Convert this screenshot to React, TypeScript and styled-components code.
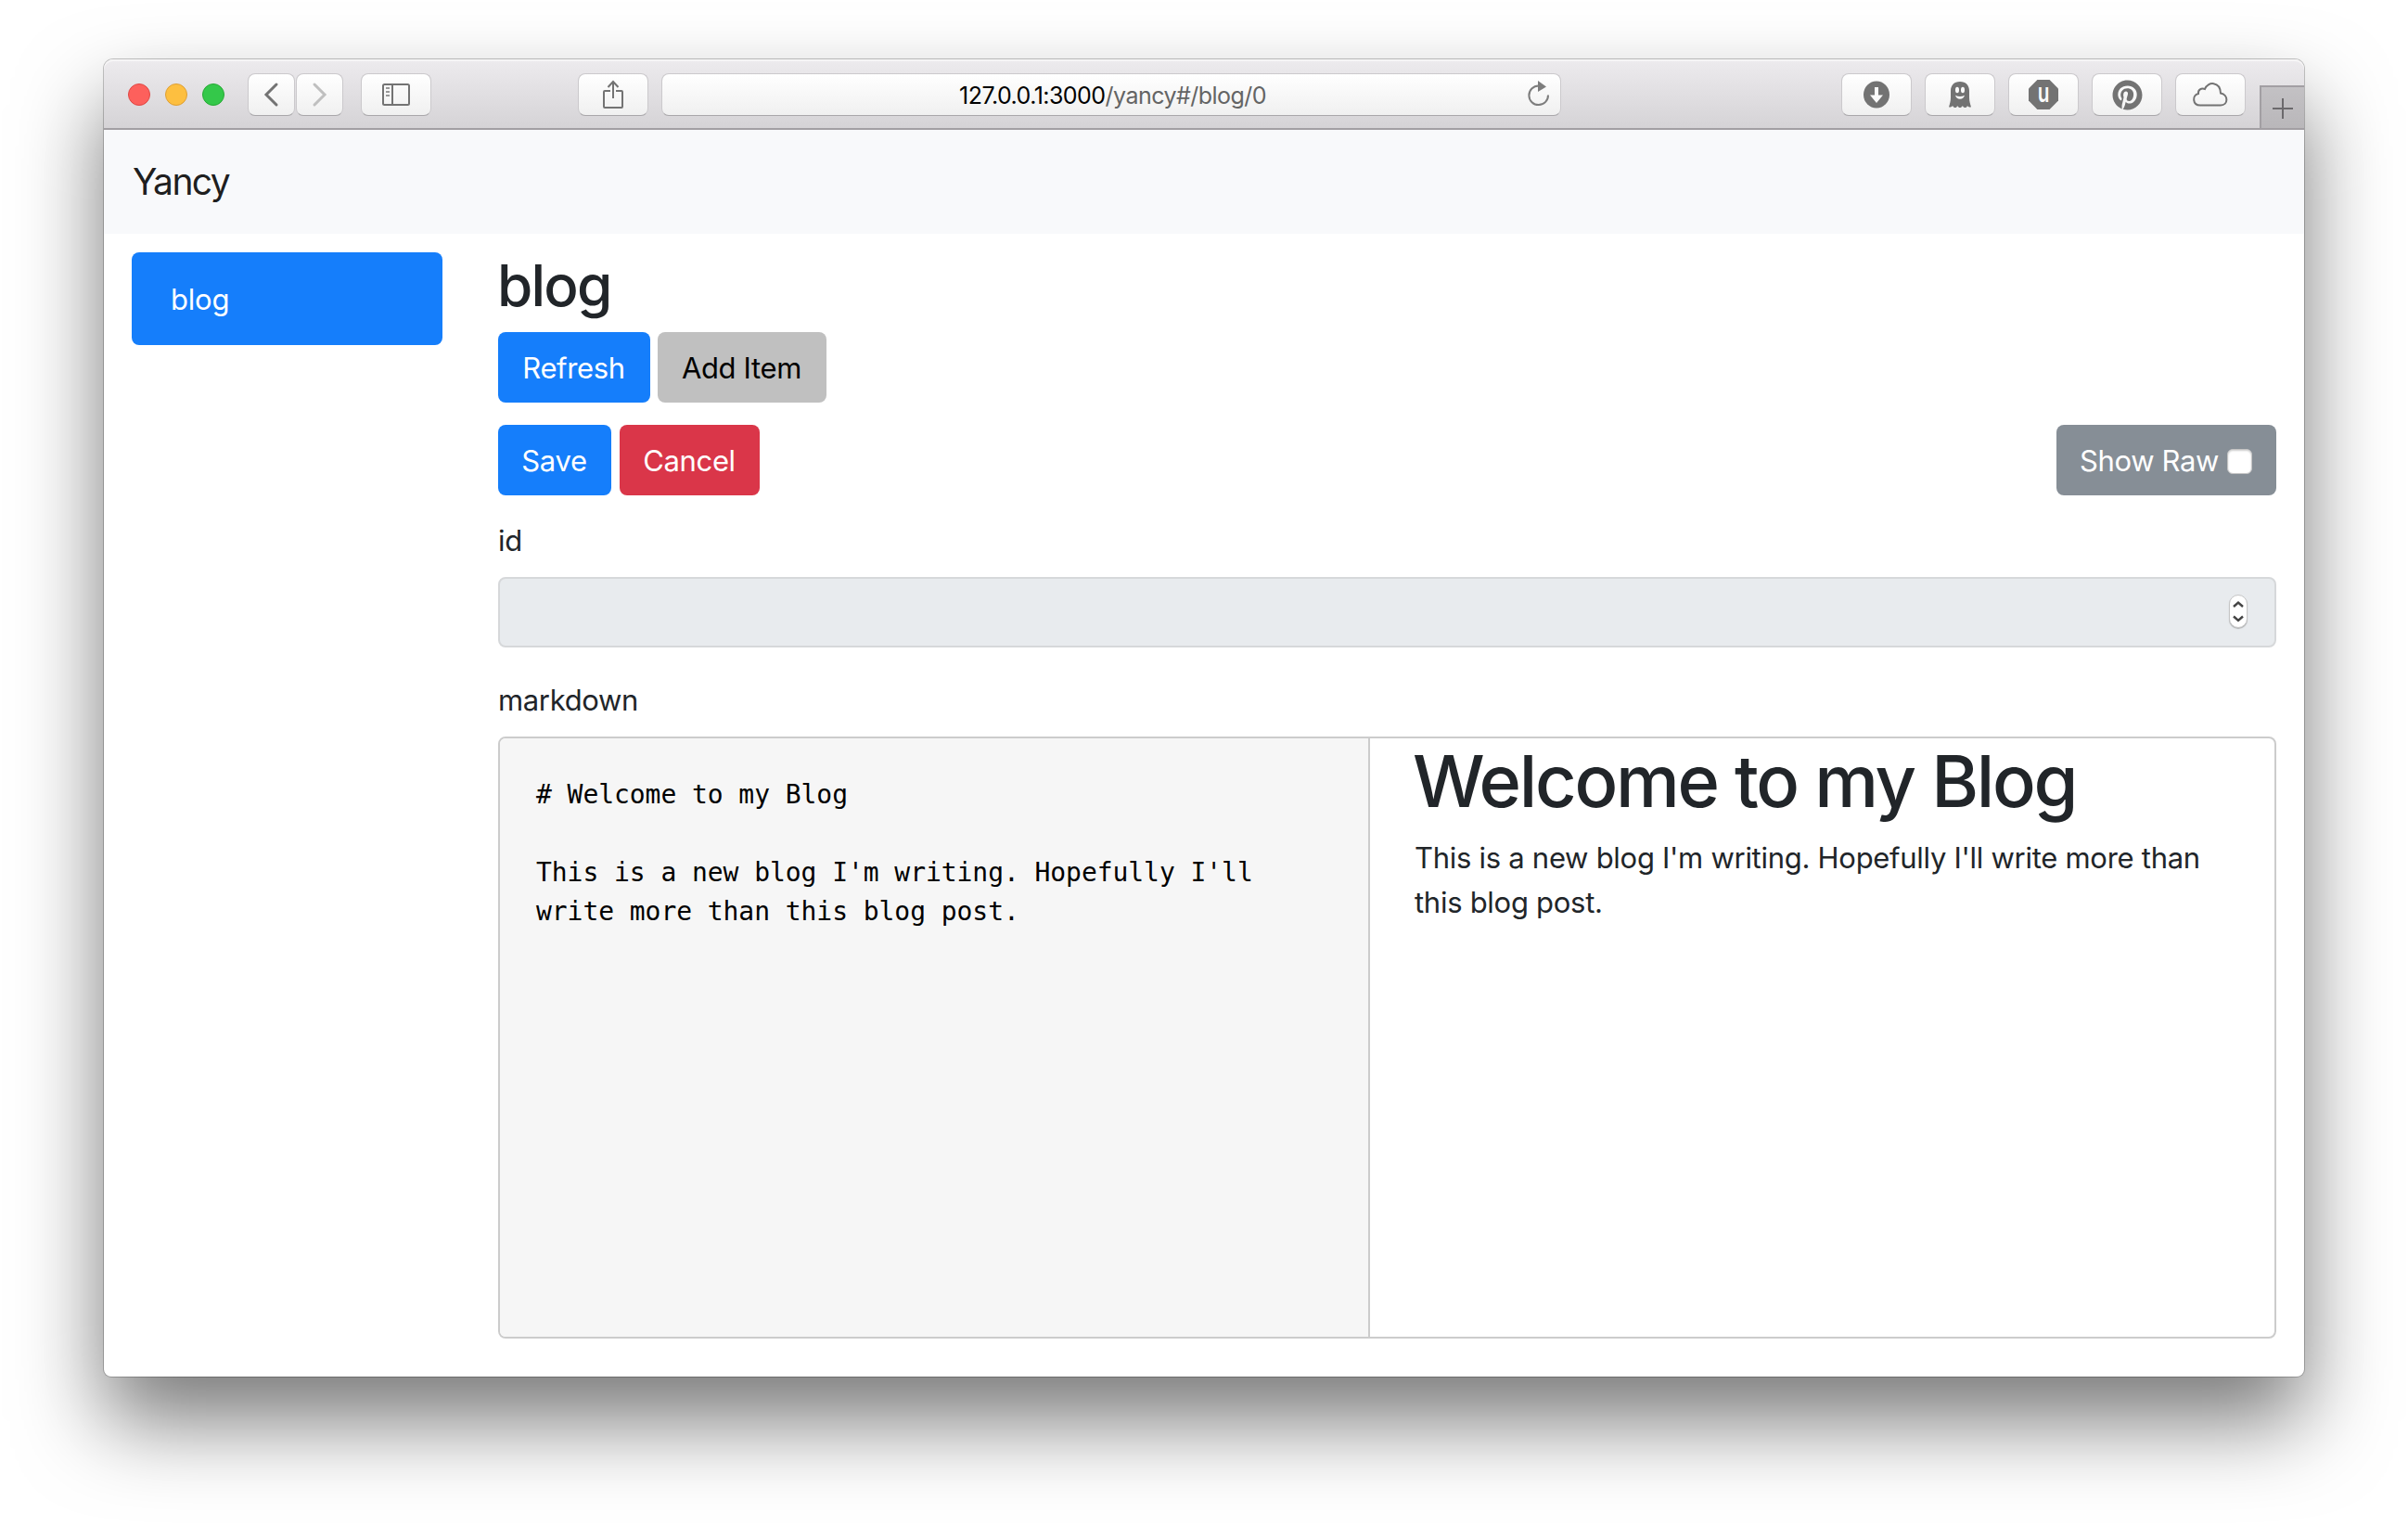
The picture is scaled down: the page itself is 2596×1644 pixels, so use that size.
import React from "react";
import styled, { createGlobalStyle } from "styled-components";
import { FaPinterest } from "react-icons/fa";

const GlobalStyle = createGlobalStyle`
  *, *::before, *::after { box-sizing: border-box; }
  html, body { margin: 0; background: #fff; }
  body {
    font-family: Inter, "Liberation Sans", sans-serif;
    font-size: 31px;
    line-height: 48px;
    color: #212529;
  }
  h1, h2, p, pre { margin: 0; }
`;

const Desktop = styled.div`
  width: 2596px;
  height: 1644px;
  padding: 64px 112px 160px;
  overflow: hidden;
`;

const Window = styled.div`
  display: flex;
  flex-direction: column;
  height: 1420px;
  border-radius: 10px 10px 8px 8px;
  background: #fff;
  box-shadow: 0 0 0 1px rgba(0, 0, 0, 0.22), 0 48px 92px rgba(0, 0, 0, 0.53);
`;

const TitleBar = styled.header`
  display: flex;
  align-items: flex-start;
  height: 76px;
  padding: 15px 0 0 26px;
  border-bottom: 2px solid #a29fa3;
  border-radius: 10px 10px 0 0;
  background: linear-gradient(#edebee, #d5d3d6);
  box-shadow: inset 0 2px 0 #f6f5f6;
`;

const Lights = styled.div`
  display: flex;
  gap: 16px;
  margin: 11px 25px 0 0;
`;

const Light = styled.span<{ $fill: string; $edge: string }>`
  width: 24px;
  height: 24px;
  border: 1px solid ${(p) => p.$edge};
  border-radius: 50%;
  background: ${(p) => p.$fill};
`;

const ToolButton = styled.span<{ $width: number; $after?: number }>`
  display: flex;
  align-items: center;
  justify-content: center;
  flex: none;
  width: ${(p) => p.$width}px;
  height: 46px;
  margin-right: ${(p) => p.$after ?? 0}px;
  border: 1px solid #cbc9cc;
  border-bottom-color: #a9a7aa;
  border-radius: 8px;
  background: linear-gradient(#fff, #f0f0f0);
  color: #737373;

  svg { display: block; overflow: visible; }
`;

const AddressBar = styled(ToolButton)`
  position: relative;
  font-size: 25px;
  line-height: 32px;
  letter-spacing: -0.54px;
  color: #646464;
  white-space: pre;
`;

const Address = styled.span`
  padding: 2px 0 0 3px;
`;

const Host = styled.b`
  font-weight: 400;
  color: #000;
`;

const ReloadSlot = styled.span`
  position: absolute;
  right: 10px;
  top: 6px;
`;

const Extensions = styled.div`
  display: flex;
  gap: 14px;
  margin-left: auto;
`;

const NewTab = styled.span`
  display: flex;
  align-items: center;
  justify-content: center;
  width: 48px;
  height: 46px;
  margin: 13px 0 0 15px;
  padding-top: 2px;
  border: solid #a29fa3;
  border-width: 2px 0 0 2px;
  background: linear-gradient(#c3c1c4, #b9b7ba);
`;

const Navbar = styled.nav`
  height: 112px;
  padding: 32px 31px;
  background: #f8f9fb;
`;

const Brand = styled.span`
  font-size: 39px;
  letter-spacing: -1.6px;
  color: rgba(0, 0, 0, 0.9);
`;

const Body = styled.div`
  display: grid;
  grid-template-columns: 335px 1917px;
  column-gap: 60px;
  padding: 16px 30px 0;
`;

const SideLink = styled.a`
  display: block;
  height: 100px;
  margin-top: 4px;
  padding: 27px 42px;
  border-radius: 8px;
  background: #157efb;
  color: #fff;
  letter-spacing: -0.2px;
`;

const Title = styled.h2`
  margin: 0 0 12px -1px;
  padding-top: 1px;
  font-size: 62px;
  line-height: 77px;
  font-weight: 500;
  letter-spacing: -1.8px;
`;

const ButtonRow = styled.div<{ $gap: number }>`
  display: flex;
  gap: ${(p) => p.$gap}px;
  margin-bottom: 24px;
`;

const tones = {
  primary: ["#157efb", "#fff"],
  plain: ["#c0c0c0", "#000"],
  danger: ["#da3649", "#fff"],
  muted: ["#868e96", "#fff"],
} as const;

const Button = styled.span<{ $tone: keyof typeof tones; $width: number; $push?: boolean }>`
  display: flex;
  align-items: center;
  justify-content: center;
  width: ${(p) => p.$width}px;
  height: 76px;
  padding: 2px 1px 0 0;
  margin-left: ${(p) => (p.$push ? "auto" : "0")};
  border-radius: 8px;
  background: ${(p) => tones[p.$tone][0]};
  color: ${(p) => tones[p.$tone][1]};
  letter-spacing: -0.35px;
  white-space: nowrap;
`;

const Check = styled.span`
  width: 27px;
  height: 27px;
  margin-left: 9px;
  border: 1px solid #c4c4c4;
  border-radius: 6px;
  background: #fff;
  box-shadow: inset 0 1px 2px rgba(0, 0, 0, 0.2);
`;

const Label = styled.div`
  padding-top: 1px;
  letter-spacing: -0.35px;
  margin-bottom: 15px;
`;

const NumberField = styled.div`
  display: flex;
  align-items: center;
  justify-content: flex-end;
  height: 76px;
  margin-bottom: 32px;
  padding-right: 29px;
  border: 2px solid #d6d8da;
  border-radius: 8px;
  background: #e8ebee;
`;

const Stepper = styled.span`
  display: flex;
  width: 20px;
  height: 36px;
  margin-bottom: 2px;
  border: 1px solid #c6c6c6;
  border-radius: 10px;
  background: #fff;
  box-shadow: 0 1px 1px rgba(0, 0, 0, 0.25);
`;

const Editor = styled.div`
  display: grid;
  grid-template-columns: 938px 1fr;
  height: 649px;
  border: 2px solid #ccc;
  border-radius: 8px;
`;

const Source = styled.pre`
  padding: 40px 0 0 39px;
  border-right: 2px solid #ccc;
  border-radius: 6px 0 0 6px;
  background: #f6f6f6;
  color: #000;
  font-family: "DejaVu Sans Mono", monospace;
  font-size: 28px;
  line-height: 42px;
  letter-spacing: -0.06px;
`;

const Preview = styled.div`
  padding-left: 48px;
`;

const PreviewTitle = styled.h1`
  margin: 0 0 13px -2px;
  font-size: 77.5px;
  line-height: 92px;
  font-weight: 500;
  letter-spacing: -2.3px;
`;

const PreviewText = styled.p`
  width: 880px;
  letter-spacing: -0.28px;
`;

const GHOST =
  "M12 0C5.500 0 2 4 2 10V17C2 21.500 1 24 0 27.200C1.500 27.800 3 27.400 4 26C5 27.900 6 28 7 28C8 28 8.600 27.600 9.200 26C10 27.600 11 28 12 28C13 28 14 27.600 14.800 26C15.600 27.600 16.500 28 17.500 28C18.600 28 19.500 27.600 20 26C21 27.400 22.500 27.800 24 27.200C23 24 22 21.500 22 17V10C22 4 18.500 0 12 0Z";

const source = `# Welcome to my Blog

This is a new blog I'm writing. Hopefully I'll
write more than this blog post.`;

export default function App() {
  return (
    <>
      <GlobalStyle />
      <Desktop>
        <Window>
          <TitleBar>
            <Lights>
              <Light $fill="#fd605c" $edge="#df4744" />
              <Light $fill="#fdbf40" $edge="#de9f34" />
              <Light $fill="#34c84a" $edge="#26a934" />
            </Lights>
            <ToolButton $width={51} $after={1}>
              <svg width="18" height="26" fill="none" stroke="currentColor" strokeWidth="3" strokeLinecap="round">
                <path d="M14 2L3 13L14 24" />
              </svg>
            </ToolButton>
            <ToolButton $width={51} $after={19}>
              <svg width="16" height="26" fill="none" stroke="#bfbfbf" strokeWidth="3" strokeLinecap="round">
                <path d="M2 2L13 13L2 24" />
              </svg>
            </ToolButton>
            <ToolButton $width={76} $after={158}>
              <svg width="30" height="24" fill="none" stroke="currentColor" strokeWidth="2">
                <rect x="1" y="1" width="28" height="22" rx="1.500" />
                <path d="M11 1V23" />
                <path d="M4 5H8M4 9H8M4 13H8" stroke="#999" />
              </svg>
            </ToolButton>
            <ToolButton $width={76} $after={14}>
              <svg width="22" height="34" fill="none" stroke="currentColor" strokeWidth="2">
                <path d="M8 13H2Q1 13 1 14V30Q1 31 2 31H20Q21 31 21 30V14Q21 13 20 13H14" />
                <path d="M11 21V3M5.500 9L11 3L16.500 9" />
              </svg>
            </ToolButton>
            <AddressBar $width={970}>
              <Address>
                <Host>127.0.0.1:3000</Host>/yancy#/blog/0
              </Address>
              <ReloadSlot>
                <svg width="26" height="30" fill="none" stroke="#7d7d7d" strokeWidth="2">
                  <path d="M23 16.500A10.300 10.300 0 1 1 12.700 6.500" />
                  <path d="M12 1L21 7.500L12 13Z" fill="#7d7d7d" stroke="none" />
                </svg>
              </ReloadSlot>
            </AddressBar>
            <Extensions>
              <ToolButton $width={76}>
                <svg width="28" height="30">
                  <ellipse cx="14" cy="15" rx="14" ry="14.500" fill="currentColor" />
                  <path d="M12 7H16V15.500H21L14 24L7 15.500H12Z" fill="#fafafa" />
                </svg>
              </ToolButton>
              <ToolButton $width={76}>
                <svg width="24" height="28" fill="currentColor">
                  <path d={GHOST} />
                  <ellipse cx="9" cy="9" rx="2" ry="3.300" fill="#fafafa" />
                  <ellipse cx="15" cy="9" rx="2" ry="3.300" fill="#fafafa" />
                  <path d="M7 14.800Q12 17.200 17 14.800Q15.800 18.800 12 18.800Q8.200 18.800 7 14.800Z" fill="#fafafa" />
                </svg>
              </ToolButton>
              <ToolButton $width={76}>
                <svg width="32" height="32">
                  <path d="M9.400 0H22.600L32 9.400V22.600L22.600 32H9.400L0 22.600V9.400Z" fill="currentColor" />
                  <text
                    transform="translate(16 24) scale(0.74 1)"
                    textAnchor="middle"
                    fontFamily="Inter, sans-serif"
                    fontWeight="600"
                    fontSize="28"
                    fill="#fafafa"
                  >
                    u
                  </text>
                </svg>
              </ToolButton>
              <ToolButton $width={76}>
                <FaPinterest size={33} />
              </ToolButton>
              <ToolButton $width={76}>
                <svg width="38" height="28" fill="none" stroke="currentColor" strokeWidth="2">
                  <path d="M8 25.500C-0.500 25.500-1 14.500 6 13C5.500 9 9 6.500 13 8C16-0.500 29.500-0.500 30 12.500C38.500 14 38.500 25.500 30 25.500Z" />
                </svg>
              </ToolButton>
            </Extensions>
            <NewTab>
              <svg width="22" height="22" stroke="#6b696c" strokeWidth="2">
                <path d="M11 0V22M0 11H22" />
              </svg>
            </NewTab>
          </TitleBar>
          <Navbar>
            <Brand>Yancy</Brand>
          </Navbar>
          <Body>
            <aside>
              <SideLink>blog</SideLink>
            </aside>
            <main>
              <Title>blog</Title>
              <ButtonRow $gap={8}>
                <Button $tone="primary" $width={164}>Refresh</Button>
                <Button $tone="plain" $width={182}>Add Item</Button>
              </ButtonRow>
              <ButtonRow $gap={9}>
                <Button $tone="primary" $width={122}>Save</Button>
                <Button $tone="danger" $width={151}>Cancel</Button>
                <Button $tone="muted" $width={237} $push>
                  Show Raw
                  <Check />
                </Button>
              </ButtonRow>
              <Label>id</Label>
              <NumberField>
                <Stepper>
                  <svg width="18" height="34" fill="none" stroke="#444" strokeWidth="2.400">
                    <path d="M4 12L9 7.500L14 12M4 22.500L9 27L14 22.500" />
                  </svg>
                </Stepper>
              </NumberField>
              <Label>markdown</Label>
              <Editor>
                <Source>{source}</Source>
                <Preview>
                  <PreviewTitle>Welcome to my Blog</PreviewTitle>
                  <PreviewText>
                    This is a new blog I'm writing. Hopefully I'll write more than this blog post.
                  </PreviewText>
                </Preview>
              </Editor>
            </main>
          </Body>
        </Window>
      </Desktop>
    </>
  );
}
